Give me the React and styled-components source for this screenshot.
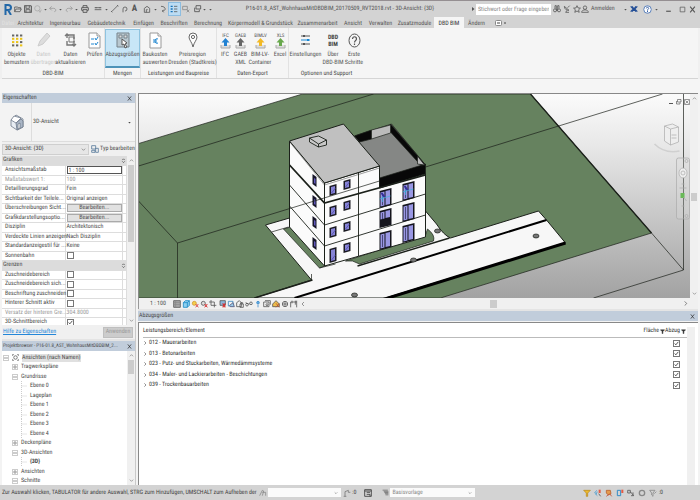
import React from "react";
import styled, { createGlobalStyle, css } from "styled-components";

const Global = createGlobalStyle`
  * { box-sizing: border-box; }
  body { margin: 0; background: #f0f0f0; text-rendering: geometricPrecision; }
  body, button, input, select, table {
    font-family: "Roboto Condensed", Roboto, sans-serif;
    font-size: 6px; line-height: 8px; color: #4a4a4a;
  }
  button, input, select { margin: 0; padding: 0; border: 0; background: none; border-radius: 0; text-rendering: inherit; }
  svg { display: block; flex: none; }
`;

const Page = styled.div`
  display: flex; flex-direction: column; min-height: 100vh; overflow: hidden;
`;
const TitleBar = styled.header`
  display: flex; align-items: center; height: 17px; padding: 0 3px 0 3px;
  background: #d3d3d3; border-top: 1px solid #958f92;
`;
const QuickTools = styled.div`
  display: flex; align-items: center; width: 210px; height: 16px;
`;
const ToolButton = styled.button`
  display: flex; align-items: center; justify-content: center;
  width: ${(p) => p.$w || 11}px; height: 12px; color: #555;
  ${(p) => p.$on && css`background: #bcdcf3; outline: 1px solid #8dbde0;`}
`;
const LetterTool = styled.b`font-size: 9px;`;
const DocTitle = styled.h1`
  flex: 1; margin: 0; padding-left: 2px; padding-right: 4px; text-align: center;
  font-size: 6px; font-weight: 400; white-space: nowrap; color: #555;
`;
const Search = styled.input`
  width: 75px; height: 11px; padding: 0 2px; background: #fff; color: #888;
  &::placeholder { color: #888; opacity: 1; }
`;
const TitleActions = styled.div`
  display: flex; align-items: center; width: 146px;
`;
const SignIn = styled.button`
  display: flex; align-items: center; gap: 2px; width: 42px; height: 12px; color: #555;
`;
const Tabs = styled.nav`
  display: flex; height: 11px; padding-left: 1px; background: #d3d3d3;
`;
const Tab = styled.a`
  width: ${(p) => p.$w}px; text-align: center; line-height: 13px; text-decoration: none;
  white-space: nowrap; color: ${(p) => (p.$faint ? "#e2e2e2" : "#555")};
  ${(p) => p.$on && css`background: #f5f5f5; color: #333;`}
`;
const Ribbon = styled.section`
  display: flex; height: 51px; margin: 0 2px; background: #f5f5f5; border-bottom: 1px solid #d5d5d5;
`;
const Group = styled.div`
  display: flex; flex-direction: column; border-right: 1px solid ${(p) => (p.$last ? "transparent" : "#e2e2e2")};
`;
const GroupTools = styled.div`display: flex; height: 40px; padding-top: 1px;`;
const GroupName = styled.div`text-align: center; line-height: 11px; white-space: nowrap;`;
const RibbonButton = styled.button`
  display: flex; flex-direction: column; align-items: center; width: ${(p) => p.$w}px; height: 39px;
  white-space: nowrap; color: ${(p) => (p.$off ? "#c8c8c8" : "#555")};
  ${(p) => p.$on && css`background: #c8e6f7; border: 1px solid #8fc3df; border-bottom: 2px solid #4e93b8;`}
`;
const IconBox = styled.span`
  display: flex; flex: none; align-items: center; justify-content: center; height: ${(p) => (p.$on ? 21 : 22)}px;
`;
const Spacer = styled.div`height: 14px; background: #f5f5f5;`;

const Main = styled.main`
  flex: 1; display: grid; grid-template-columns: 134px minmax(0, 1fr); column-gap: 2px; padding: 0 2px;
  background: #f3f3f3;
`;
const Side = styled.aside`
  display: flex; flex-direction: column; border-right: 1px solid #c9c9c9; background: #f0f0f0;
`;
const Work = styled.section`display: flex; flex-direction: column; min-width: 0;`;
const PanelTitle = styled.h2`
  display: flex; align-items: center; justify-content: space-between; flex: none; height: 10px; margin: 0;
  padding: 0 3px 0 1px; background: #c1cddb; font-size: ${(p) => (p.$long ? 5 : 6)}px; line-height: 10px;
  font-weight: 400; white-space: nowrap;
`;
const CloseButton = styled.button`display: flex; align-items: center; height: 8px; color: #333;`;
const TypeRow = styled.div`
  display: flex; align-items: center; height: 39px; background: #f3f3f3; border-bottom: 1px solid #ddd;
`;
const TypeIcon = styled.div`
  display: flex; align-items: center; justify-content: center; width: 30px; height: 38px; border-right: 1px solid #ddd;
`;
const TypeName = styled.button`
  display: flex; flex: 1; align-items: center; justify-content: space-between; padding: 0 3px 0 1px; height: 32px;
`;
const InstanceRow = styled.div`
  display: flex; align-items: center; height: 14px; gap: 2px;
`;
const InstanceSelect = styled.select`
  width: 87px; height: 11px; padding: 0 2px; border: 1px solid #cfcfcf; background: #e6e6e6; color: #444;
  appearance: none;
`;
const SelectWrap = styled.span`
  position: relative; display: block;
  & > svg { position: absolute; right: 3px; top: 3px; pointer-events: none; }
`;
const TypeButton = styled.button`display: flex; align-items: center; gap: 1px; white-space: nowrap;`;
const Scroller = styled.div`display: flex; overflow: hidden; height: ${(p) => p.$h}px; ${(p) => p.$white && css`background: #fff;`}`;
const PropTable = styled.table`
  width: calc(100% - 8px); table-layout: fixed; border-collapse: collapse; background: #fff; height: 171px;
  td, th { padding: 0 0 0 3px; border: 0 solid #ddd; border-width: 0 1px 1px 0;
    white-space: nowrap; text-align: left; font-weight: 400; line-height: 8px; }
  td { padding-left: 1px; }
  tr { height: 9px; }
  tr:nth-child(even) { height: 10px; }
`;
const NameCol = styled.col`width: 63px;`;
const TailCol = styled.col`width: 4px;`;
const SectionCell = styled.th`
  && { background: #dcdcdc; padding-left: 1px; }
`;
const SectionInner = styled.div`display: flex; justify-content: space-between; align-items: center;`;
const Muted = styled.span`color: #999;`;
const ScaleInput = styled.input`
  display: block; width: 100%; height: 8px; border: 1px solid #555; padding-left: 1px; line-height: 6px;
`;
const EditButton = styled.button`
  display: block; width: 100%; height: 8px; background: #e1e1e1; border: 1px solid #aaa; line-height: 6px;
`;
const Check = styled.input`
  appearance: none; display: block; width: 7px; height: 7px; margin: ${(p) => (p.$center ? "0 auto" : "0")};
  border: 1px solid #777; background: #fff;
  &:checked {
    background: #fff url("data:image/svg+xml,%3Csvg xmlns='http://www.w3.org/2000/svg' viewBox='0 0 6 6'%3E%3Cpath d='M.8 3l1.4 1.6L5.2 1' fill='none' stroke='%23333' /%3E%3C/svg%3E") center / 100%;
  }
`;
const Bar = styled.div`
  display: flex; flex-direction: column; align-items: center; justify-content: space-between; flex: none;
  width: 8px; padding: 2px 0; background: #f0f0f0; color: #555;
`;
const Thumb = styled.div`width: 6px; height: ${(p) => p.$h}px; margin-bottom: ${(p) => p.$mb}px; margin-top: 2px; background: #ccc;`;
const PropFooter = styled.div`
  display: flex; align-items: center; justify-content: space-between; height: 14px; padding: 0 2px 0 1px;
`;
const Help = styled.a`color: #2386d8;`;
const Apply = styled.button`width: 30px; height: 11px; background: #ccc; border: 1px solid #bfbfbf; color: #999;`;
const Gap = styled.div`height: 2px; background: #e4e4e4; flex: none;`;
const Tree = styled.ul`
  flex: 1; margin: 0; padding: 2px 0 0 1px; list-style: none; overflow: hidden; background: #fff;
`;
const Node = styled.li`
  display: flex; align-items: center; height: 9px; padding-left: ${(p) => p.$depth * 9}px; gap: 3px; white-space: nowrap;
  &:nth-child(even) { height: 10px; }
`;
const Branch = styled.span`width: 6px; height: 100%; display: flex; align-items: center; justify-content: center;`;
const NodeText = styled.span`
  font-weight: ${(p) => (p.$bold ? 700 : 400)};
  ${(p) => p.$sel && css`background: #e0e0e0; padding-right: 1px;`}
`;

const ViewArea = styled.div`position: relative; display: flex; height: 205px; border: solid #888; border-width: 1px 0 0 1px;`;
const Canvas = styled.div`flex: 1; min-width: 0; svg { width: 100%; height: 100%; }`;
const ViewButtons = styled.div`position: absolute; top: 2px; right: 7px; display: flex;`;
const ViewBar = styled.div`
  display: flex; align-items: center; height: 11px; padding-left: 11px; background: #f0f0f0; border-left: 1px solid #999;
`;
const ScaleLabel = styled.button`width: 22px; text-align: left;`;
const HTrack = styled.div`flex: 1; display: flex; align-items: center; justify-content: space-between; padding-right: 10px;`;
const HThumb = styled.div`width: 7px; height: 8px; margin-left: 48%; background: #ccc;`;
const ListArea = styled.div`
  flex: 1; display: flex; margin-top: 1px; padding: 4px 3px 0 4px; background: #fff;
  border: solid #888; border-width: 1px 0 0 1px;
`;
const List = styled.table`
  width: 100%; align-self: flex-start; border-collapse: collapse;
  th { height: 10px; padding: 0 0 2px; font-weight: 400; text-align: left; border-bottom: 1px solid #bbb; color: #333; white-space: nowrap; }
  td { height: 11px; padding: 0; color: #333; }
  tbody tr:nth-child(2n) td { height: 10px; }
`;
const CheckCol = styled.col`width: 22px;`;
const AreaCol = styled.col`width: 20px;`;
const RowLabel = styled.span`display: flex; align-items: center; gap: 2px;`;
const Filter = styled.span`display: flex; align-items: center; gap: 1px;`;
const ListBar = styled.div`width: 8px; flex: none; background: #f0f0f0;`;
const Status = styled.footer`
  display: flex; align-items: center; height: 15px; padding-left: 2px; background: #d3d3d3; color: #444; white-space: nowrap;
`;
const StatusText = styled.span`flex: none; width: 256px;`;
const StatusSelect = styled.select`
  width: ${(p) => p.$w}px; height: 9px; padding: 0 2px; background: #fafafa; appearance: none; color: #888;
`;
const StatusTools = styled.div`display: flex; align-items: center; margin-left: auto; padding-right: 37px;`;

const paths = {
  open: <path d="M1 10V3h4l1 1h4v2M1 10l2-4h8L9 10z" />,
  save: <><path d="M1 1h9l1 1v9H1z" strokeWidth="1.6" /><path d="M3 1v4h5V1M3 11V7h6v4" /></>,
  sync: <><circle cx="5" cy="5" r="4" stroke="#aaa" /><path d="M7 8l2 3 2-4" stroke="#aaa" /></>,
  undo: <path d="M4 2L1 5l3 3M1 5h6c4 0 4 5 1 5" stroke="#999" />,
  redo: <path d="M8 2l3 3-3 3M11 5H5C1 5 1 10 4 10" stroke="#999" />,
  print: <><path d="M3 4V1h6v3M3 8H1V4h10v4H9M3 7h6v4H3z" strokeWidth="1.4" /></>,
  measure: <path d="M1 4h10M1 7h10M3 3v2M9 3v2" />,
  line: <path d="M1 10L10 1M0 9l2 2M9 0l2 2" />,
  tag: <path d="M3 11V6a3 3 0 1 1 3 3" />,
  home: <path d="M2 5l4-3 4 3v6H2zM5 11V7h2" />,
  spin: <><path d="M3 2c8 0 8 7 2 7" /><path d="M7 7L5 9l2 2" /></>,
  thin: <><path d="M1 2h3M1 6h3M1 10h3" stroke="#1672b8" strokeWidth="2" /><path d="M6 2h5M6 6h5M6 10h5" /></>,
  closewin: <path d="M1 2h7v5H1zM7 7l4 4M11 7l-4 4" stroke="#888" />,
  windows: <path d="M3 1h7v5H3zM1 4v6h7V7" strokeWidth="1.3" />,
  find: <><circle cx="3" cy="8" r="2.3" /><circle cx="9" cy="8" r="2.3" /><path d="M3 5V1h2v7h2V1h2v4" /></>,
  satellite: <path d="M2 2c0 4 3 6 7 6L2 2zM6 8l-2 3h5M7 4l3-3" />,
  star: <path d="M6 1l1.5 3.4 3.7.3-2.8 2.5.9 3.8L6 9l-3.3 2 .9-3.8L.8 4.7l3.7-.3z" />,
  user: <><circle cx="6" cy="4" r="2.6" /><path d="M1 11c0-5 10-5 10 0z" /></>,
  exchange: <path d="M1 2l4 4-4 4M11 2L7 6l4 4M3 2l6 8M9 2L3 10" stroke="#244f97" strokeWidth="1.8" />,
  help: <><circle cx="6" cy="6" r="5" fill="#fff" stroke="#4b75b5" /><path d="M4.5 4.5c0-2 3-2 3 0 0 1-1.5 1-1.5 3M6 8v1.5" stroke="#244f97" /></>,
  min: <path d="M2 9h8" strokeWidth="2" />,
  max: <path d="M2 2h8v8H2z" />,
  x: <path d="M2 1l8 10M10 1L2 11" strokeWidth="1.8" />,
  boxx: <path d="M1 1h10v10H1zM3 3l6 6M9 3L3 9" />,
  caret: <path d="M3 5h6L6 8.5z" fill="currentColor" stroke="none" />,
  chevD: <path d="M2 4l4 4 4-4" />,
  chevU: <path d="M2 8l4-4 4 4" />,
  chevR: <path d="M4 1l5 5-5 5" strokeWidth="1.6" />,
  chevL: <path d="M8 2L4 6l4 4" />,
  play: <path d="M4 2l5 4-5 4z" fill="currentColor" stroke="none" />,
  double: <path d="M3 5l3-3 3 3M3 8l3 3 3-3" strokeWidth="1.8" />,
  grid: <><path d="M1 1h10v10H1z" fill="#aaa" /><path d="M1 4h10M1 7h10M4 1v10" stroke="#888" /></>,
  cube: <><path d="M2 4l3-3h6v7l-3 3H2z" fill="#8fd0f0" stroke="#1787c4" /><path d="M2 4h6v7M8 4l3-3" stroke="#1787c4" /></>,
  sun: <><circle cx="5" cy="5" r="3" fill="#f5cd4c" stroke="#d09a32" /><path d="M7 6l4 5M11 6l-4 5" stroke="#d82d2d" /></>,
  shadow: <><circle cx="5" cy="5" r="3" fill="#ddd" /><path d="M7 6l4 5M11 6l-4 5" stroke="#d82d2d" strokeWidth="1.5" /></>,
  crop: <path d="M3 0v8h8M0 3h8v8" />,
  cropred: <><path d="M3 1v7h8V1z" fill="#8ab6da" /><path d="M7 5l4 6M11 5l-4 6" stroke="#d82d2d" strokeWidth="1.6" /></>,
  cropblue: <><path d="M2 2h7v7H2z" stroke="#3888bf" /><path d="M4 8l5-4 2 6H5z" fill="#9ac9e8" stroke="#557" /></>,
  lock: <><path d="M1 4l4-3 3 3v6H1z" /><path d="M6 6h5v5H6zM7 6V4h3v2" /></>,
  glasses: <><circle cx="3" cy="7" r="2" /><circle cx="9" cy="5" r="2" /><path d="M1 4l4 2h2" /></>,
  bulb: <><circle cx="6" cy="4" r="2" fill="#62ace2" stroke="#3d8ccc" /><path d="M6 7v4" stroke="#3d8ccc" /></>,
  box: <><path d="M1 3h8v7H1zM3 1h8v6" /><circle cx="6" cy="7" r="1.5" /></>,
  paint: <><path d="M1 6l5-5 5 5v4H1z" fill="#edbe4b" /><path d="M6 5l5 6M11 5L6 11" stroke="#b24b38" /></>,
  globe: <><circle cx="6" cy="6" r="4" /><path d="M2 6h8M6 2v8" /></>,
  frame: <path d="M1 11V3h9V1M3 1v4M8 1v6M10 3v8" />,
  filter: <path d="M1 2h10L7 6v5H5V6z" fill="currentColor" stroke="currentColor" />,
  filterY: <path d="M1 2h10L7 6v5H5V6z" fill="#efbc2c" stroke="#bd8b20" />,
  selLink: <><path d="M4 2L1 6l4 4M5 4l-2 4" stroke="#4199cf" /><path d="M7 1h3v5H7z" fill="#e65b44" stroke="none" /><path d="M7 7l3 4" /></>,
  selHouse: <><path d="M2 2h6l1 5-4 2-3-3z" fill="#e59b4d" stroke="#b75f2c" /><path d="M7 7l3 4M2 11l4-3" stroke="#c44c33" /></>,
  selPin: <><path d="M2 2h5v8H2z" stroke="#328cc7" strokeWidth="1.5" /><path d="M8 1h3v5H8z" fill="#e65b44" stroke="none" /></>,
  drag: <path d="M1 2h4v4H1zM5 4l5 6H6M9 5v5" />,
  ring: <circle cx="6" cy="6" r="4" stroke="#888" strokeWidth="2" />,
  worker: <path d="M1 10l4-8 2 1-2 7M5 5h5v5" stroke="#888" />,
  funnel: <path d="M1 2h8L6 6v5L4 9V6zM8 7l3-3" stroke="#888" />,
  sheet: <><path d="M1 1h10v10H1z" stroke="#333" /><path d="M1 3h10M4 5h5M4 8h5v3" stroke="#333" /></>,
  layers: <path d="M1 2h9M3 4h8M4 6h7M5 8h6M6 10h5" stroke="#777" strokeWidth="1.5" />,
  key: <path d="M3 11V4l5-2v3M1 11h4M8 5h3" stroke="#777" />,
  edit: <><path d="M1 1h6v5H1zM1 8h5v3H1zM7 5h4v6H7z" stroke="#579" /></>,
  ansichten: <><circle cx="6" cy="6" r="3" /><path d="M1 3V1h2M9 1h2v2M11 9v2H9M3 11H1V9" /></>,
};
const Ic = ({ n, s = 8 }) => (
  <svg width={s} height={s} viewBox="0 0 12 12" fill="none" stroke="currentColor" strokeWidth="1.2" aria-hidden="true">{paths[n]}</svg>
);

const Objects = () => (
  <svg width="12" height="13" viewBox="0 0 12 13">
    {[0, 1, 2, 3].map((r) => [0, 1, 2].map((c) => (
      <rect key={`${r}${c}`} x={1 + c * 4} y={r * 3.3 + 0.5} width="2.3" height="2" fill={r === 1 || (r === 2 && c < 2) ? "#ebc315" : r === 3 && c === 2 ? "#ebc315" : "#666"} />
    )))}
  </svg>
);
const Pencil = () => (
  <svg width="14" height="16" viewBox="0 0 14 16" fill="#ddd" stroke="#ccc"><path d="M1 14l2-5 7-8 3 3-7 8z" /></svg>
);
const Refresh = () => (
  <svg width="13" height="16" viewBox="0 0 13 16" fill="none" stroke="#777"><path d="M10 7V3H3v3M1 4l2-2 2 2M3 9v4h7V9M12 12l-2 2-2-2" strokeWidth="1.4" /><path d="M5 5h5v5H5z" /></svg>
);
const DocCheck = ({ euro }) => (
  <svg width="13" height="17" viewBox="0 0 13 17" fill="#fff" stroke="#999">
    <path d="M1 1h8l3 3v12H1z" /><path d="M9 1v3h3" />
    {euro
      ? <path d="M9 7C5 5 5 13 9 11M4 8h4M4 10h4" fill="none" stroke="#2489d1" />
      : <path d="M3 7h3M3 12h3M7 6l1 2 2-3M7 11l1 2 2-3" fill="none" stroke="#2489d1" />}
  </svg>
);
const Deduct = () => (
  <svg width="14" height="17" viewBox="0 0 14 17" fill="#b9c8d0" stroke="#76838b">
    <path d="M1 1h12v14H1z" /><path d="M3 3h3v3H3zM8 3h3v3H8z" fill="#ddd" /><path d="M6 7l5 4-2 1 2 3-2 1-1-4-2 1z" fill="#fff" stroke="#555" />
  </svg>
);
const Pin = () => (
  <svg width="10" height="16" viewBox="0 0 10 16" fill="#fff" stroke="#666"><path d="M5 15C4 10 1 8 1 5a4 4 0 0 1 8 0c0 3-3 5-4 10z" /><circle cx="5" cy="5" r="1.6" /></svg>
);
const ExportIcon = ({ label, color }) => (
  <svg width="17" height="17" viewBox="0 0 17 17">
    <text x="8.5" y="5" textAnchor="middle" fontSize="5" fill="#555">{label}</text>
    <path d="M4 13v3h9v-3" fill="#ddd" stroke="#aaa" />
    <path d="M8.500 6l4 4.500h-2.500V14H7v-3.500H4.500z" fill={color} />
  </svg>
);
const Sliders = () => (
  <svg width="11" height="12" viewBox="0 0 11 12" stroke="#555"><path d="M1 2h9M1 10h9" /><path d="M1 6h9" stroke="#1687d5" /><path d="M4 1v2M4 9v2" strokeWidth="2" /><path d="M8 5v2" stroke="#1687d5" strokeWidth="2" /></svg>
);
const DbdBim = () => (
  <svg width="12" height="13" viewBox="0 0 12 13"><g fontSize="6" fontWeight="700" fill="#444" textAnchor="middle"><text x="6" y="5">DBD</text><text x="6" y="12">BIM</text></g></svg>
);
const HelpRing = () => (
  <svg width="13" height="15" viewBox="0 0 13 15" fill="none" stroke="#555"><ellipse cx="6.500" cy="7.500" rx="5.500" ry="6.500" /><path d="M4.500 6c0-3 4-3 4 0 0 1.500-2 1.500-2 3.500M6.500 10.500V12" strokeWidth="1.2" /></svg>
);
const House = () => (
  <svg width="14" height="18" viewBox="0 0 14 18" strokeWidth=".8" stroke="#6d7889">
    <path d="M1 7l5-5 7 4v8l-6 3-6-4z" fill="#e8edf3" /><path d="M1 7l3-4 7 2-5 5z" fill="#fff" /><path d="M6 10l5-4 2 2v6l-6 3z" fill="#a9b5c5" /><path d="M8 11l2-1v5l-2 1z" fill="#fff" />
  </svg>
);

const BigWindow = ({ x, y, dark, cyan }) => (
  <g>
    <path d={`M${x} ${y + 3}l12-3v17l-12 3z`} fill="#15151d" />
    <path d={`M${x + 1} ${y + 4.5}l4-1v${dark ? 7 : 14}l-4 1zM${x + 6} ${y + 3}l4.500-1v${dark ? 7 : 14}l-4.500 1z`} fill="#9997e3" />
    <path d={`M${x + 3} ${y + 5}v${dark ? 6 : 12}`} stroke="#2a2750" strokeWidth=".7" />
    {cyan && <path d={`M${x} ${y + 11}l11-3M${x + 3} ${y + 8}v6`} stroke="#3bb6dd" />}
    {cyan && <path d={`M${x + 2} ${y + 5}l3 4`} stroke="#342e9c" strokeWidth="2" />}
  </g>
);
const SmallWindow = ({ x, y, h = 9 }) => (
  <g><path d={`M${x} ${y + 2}l7-2v${h}l-7 2z`} fill="#1a1a22" /><path d={`M${x + 1.500} ${y + 3}l4-1v${h - 3}l-4 1z`} fill="#8683d6" /><path d={`M${x + 2} ${y + h - 1}l4-5`} stroke="#4a43a5" /></g>
);
const floors = [0, 21, 42, 63];
const Scene = () => (
  <svg viewBox="138 94 552 204" preserveAspectRatio="xMidYMid slice" fill="none" stroke="#1b201a" strokeWidth=".7">
    <defs><linearGradient id="sky" x1="0" y1="0" x2="0" y2="1"><stop offset="0" stopColor="#fbfbfb" /><stop offset=".25" stopColor="#e8e8e8" /><stop offset="1" stopColor="#a2a2a2" /></linearGradient></defs>
    <rect x="138" y="94" width="552" height="204" fill="url(#sky)" stroke="none" />
    <path d="M130 146L302 94h228L651 233 440 298H130z" fill="#66825f" />
    <path d="M530 94L651 233" strokeWidth="1.3" />
    <path d="M138 166L373 94M138 201l39 42v55M651 233l32 37V94M683 270l-90 28" />
    <path d="M254 298L311 280 265 225 289 218 324 230 425 211 436 224Q443 235 450 238L538 211 546 220 565 243 385 298z" fill="#f7f7f7" strokeWidth="1" />
    <path d="M283 229l7-2 37 38-8 3zM345 261l80-26 2-6q8 6 6 12l-74 23-7-3z" fill="#66825f" />
    <path d="M271 232l17-5M311 280v-6M319 268l16-4" />
    <path d="M254 298l58-18M357 266l92-28" strokeWidth="1.400" />
    <path d="M294 298L546 220" stroke="#000" strokeWidth="2" />
    <path d="M381 300L565 243" stroke="#000" strokeWidth="3" />
    <ellipse cx="437" cy="231" rx="3" ry="2" fill="#777" /><ellipse cx="535.500" cy="236" rx="3" ry="2" fill="#777" /><ellipse cx="413" cy="260" rx="3" ry="2" fill="#777" /><ellipse cx="354" cy="295" rx="3" ry="2" fill="#777" />
    <path d="M354 136l37-12 34 41-46 22-20-40z" fill="#858785" />
    <path d="M354 136l17-6v9l-12 3zM390 124l35 41-4 1-31-34zM379 178l46-14v10l-46 14z" fill="#080808" />
    <path d="M371 130l19-5v8l-19 6zM417 156l7 9-7-1z" fill="#bbb" />
    <path d="M289 141l35 42v83l-35-39zM324 183l55-17v22l46-14v63l-101 29z" fill="#fbfbfb" strokeWidth="1" />
    <path d="M289 141l54-17 36 42-55 17z" fill="#c0c0c0" strokeWidth="1" />
    <path d="M290 143l34 42 55-17" stroke="#777" />
    <path d="M289 165l35 38 101-28" strokeWidth="1.800" />
    <path d="M289 185l35 40 101-31M289 206l35 40 101-31M358 173v83M324 183v83" strokeWidth=".9" />
    <path d="M309 138l9-2 8 4-8 4zM309 138v4l9 5v-3M326 140v5l-8 2" fill="#c9c9c9" strokeWidth=".9" />
    {floors.map((d) => (
      <g key={d} stroke="none">
        <path d={`M312 ${174 + d}l4 3v10l-4-3z`} fill="#171629" /><path d={`M313.500 ${178 + d}l1.500 1v5l-1.500-1z`} fill="#6158bd" />
      </g>
    ))}
    <g stroke="none">
      {floors.map((d) => <SmallWindow key={d} x={329} y={184 + d} h={d === 63 ? 14 : 10} />)}
      {floors.map((d) => <SmallWindow key={`b${d}`} x={343} y={179 + d} />)}
      <BigWindow x={379} y={188} cyan /><BigWindow x={402} y={181} cyan />
      <BigWindow x={379} y={208} dark /><BigWindow x={402} y={202} />
      <BigWindow x={379} y={230} /><BigWindow x={402} y={223} />
    </g>
    <path d="M177 243L379 181M425 167L662 94" />
    <g stroke="#aaa">
      <path d="M664 126l8-2 6 3v15l-8 3-6-4z" fill="#eee" /><path d="M664 126l6 3 8-2M670 129v16M671 135h5M671 138h5" />
      <path d="M654 144q10 10 25 7" stroke="#d0d0d0" strokeWidth="1.500" />
      <rect x="676" y="158" width="13" height="61" rx="2" fill="#ddd" fillOpacity=".25" />
      <ellipse cx="682.500" cy="173" rx="4" ry="5" fill="#eee" /><circle cx="682.500" cy="173" r="2" /><path d="M679 188h7M681 184h3" />
      <rect x="680" y="193" width="4" height="5" fill="#69b958" stroke="none" /><path d="M683 197l3 4M681 206h3" /><circle cx="686" cy="161" r="1.500" /><circle cx="686" cy="216" r="1.500" />
    </g>
  </svg>
);

const quick = [["open"], ["save", 10], ["sync", 10], ["caret", 5], ["undo", 10], ["caret", 6], ["redo", 10], ["caret", 6], ["print", 12], ["measure", 14], ["caret", 4], ["line", 12], ["tag", 9], [null, 10], ["home", 15], ["caret", 3], ["spin", 12], ["thin", 11, true], ["closewin", 14], ["windows", 9], ["caret", 5], ["caret", 6]];
const tabs = [["Datei", 14, 0, 1], ["Architektur", 31], ["Ingenieurbau", 38], ["Gebäudetechnik", 45], ["Einfügen", 29], ["Beschriften", 32], ["Berechnung", 36], ["Körpermodell & Grundstück", 69], ["Zusammenarbeit", 45], ["Ansicht", 26], ["Verwalten", 29], ["Zusatzmodule", 39], ["DBD BIM", 30, 1], ["Ändern", 25]];
const groups = [
  ["DBD-BIM", [["Objekte", "bemustern", 29, <Objects />], ["Daten", "übertragen", 25, <Pencil />, "off"], ["Daten", "aktualisieren", 29, <Refresh />], ["Prüfen", "", 19, <DocCheck />]]],
  ["Mengen", [["Abzugsgrößen", "", 35, <Deduct />, "on"]]],
  ["Leistungen und Baupreise", [["Baukosten", "auswerten", 28, <DocCheck euro />], ["Preisregion", "Dresden (Stadtkreis)", 47, <Pin />]]],
  ["Daten-Export", [["IFC", "", 16, <ExportIcon label="IFC" color="#2382d2" />], ["GAEB", "XML", 15, <ExportIcon label="GAEB" color="#666" />], ["BIM-LV-", "Container", 24, <ExportIcon label="BIMLV" color="#f2b925" />], ["Excel", "", 16, <ExportIcon label="XLS" color="#68a84c" />]]],
  ["Optionen und Support", [["Einstellungen", "", 33, <Sliders />], ["Über", "DBD-BIM", 22, <DbdBim />], ["Erste", "Schritte", 20, <HelpRing />]]],
];
const props = [
  ["#Grafiken"], ["Ansichtsmaßstab", "scale"], ["Maßstabswert 1:", "100", 1], ["Detaillierungsgrad", "Fein"],
  ["Sichtbarkeit der Teilele...", "Original anzeigen"], ["Überschreibungen Sicht...", "edit"], ["Grafikdarstellungsoptio...", "edit"],
  ["Disziplin", "Architektonisch"], ["Verdeckte Linien anzeigen", "Nach Disziplin"], ["Standardanzeigestil für ...", "Keine"], ["Sonnenbahn", "off"],
  ["#Grenzen"], ["Zuschneidebereich", "off"], ["Zuschneidebereich sich...", "off"], ["Beschriftung zuschneiden", "off"], ["Hinterer Schnitt aktiv", "off"],
  ["Versatz der hinteren Gre...", "304.8000", 1], ["3D-Schnittbereich", "on"],
];
const tree = [["Ansichten (nach Namen)", 0, "-", "sel"], ["Tragwerkspläne", 1, "+"], ["Grundrisse", 1, "-"], ["Ebene 0", 2], ["Lageplan", 2], ["Ebene 1", 2], ["Ebene 2", 2], ["Ebene 3", 2], ["Ebene 4", 2], ["Deckenpläne", 1, "+"], ["3D-Ansichten", 1, "-"], ["{3D}", 2, "", "bold"], ["Ansichten", 1, "+"], ["Schnitte", 1, "-"]];
const works = ["012 - Mauerarbeiten", "013 - Betonarbeiten", "023 - Putz- und Stuckarbeiten, Wärmedämmsysteme", "034 - Maler- und Lackierarbeiten - Beschichtungen", "039 - Trockenbauarbeiten"];
const viewTools = ["grid", "cube", "sun", "shadow", "crop", "cropred", "cropblue", "lock", "glasses", "bulb", "box", "paint", "globe", "frame", "chevL"];

const BranchMark = ({ kind }) => (
  <svg width="6" height="10" viewBox="0 0 6 10" fill="none" stroke="#ccc">
    {kind ? <><rect x=".5" y="2.500" width="5" height="5" /><path d={kind === "+" ? "M1 5h4M3 3v4" : "M1 5h4"} stroke="#999" /></> : <path d="M.5 0v10M.5 5h5" stroke="#ccc" strokeDasharray="1 1" />}
  </svg>
);
const Value = ({ name, v, muted }) => {
  if (v === "scale") return <ScaleInput aria-label={name} defaultValue="1 : 100" />;
  if (v === "edit") return <EditButton aria-label={`${name} Bearbeiten`}>Bearbeiten...</EditButton>;
  if (v === "on" || v === "off") return <Check type="checkbox" aria-label={name} defaultChecked={v === "on"} />;
  return muted ? <Muted>{v}</Muted> : v;
};

export default function App() {
  return (
    <Page>
      <Global />
      <TitleBar>
        <QuickTools>
          <ToolButton $w={10} aria-label="Revit">
            <svg width="8" height="11" viewBox="0 0 8 11" fill="none" stroke="#2368a8" strokeWidth="2"><path d="M1.500 11V1H4c4 0 4 5 0 5H2M4 6l3 5" /></svg>
          </ToolButton>
          {quick.map(([n, w, on], i) => <ToolButton key={i} $w={w} $on={on} aria-label={n || "Text"}>{n ? <Ic n={n} s={n === "caret" ? 5 : 8} /> : <LetterTool>A</LetterTool>}</ToolButton>)}
        </QuickTools>
        <DocTitle>P16-01.8_AST_WohnhausMitDBDBIM_20170509_RVT2018.rvt - 3D-Ansicht: {"{3D}"}</DocTitle>
        <ToolButton $w={7} aria-label="Suche einblenden"><Ic n="play" s={6} /></ToolButton>
        <Search aria-label="Suche" placeholder="Stichwort oder Frage eingeben" />
        <TitleActions>
          <ToolButton $w={11} aria-label="Suchen"><Ic n="find" /></ToolButton>
          <ToolButton $w={10} aria-label="Kommunikation"><Ic n="satellite" /></ToolButton>
          <ToolButton $w={9} aria-label="Favoriten"><Ic n="star" /></ToolButton>
          <SignIn><Ic n="user" />Anmelden</SignIn>
          <ToolButton $w={4} aria-label="Konto"><Ic n="caret" s={5} /></ToolButton>
          <ToolButton $w={14} aria-label="Exchange"><Ic n="exchange" /></ToolButton>
          <ToolButton $w={13} aria-label="Hilfe"><Ic n="help" s={9} /></ToolButton>
          <ToolButton $w={5} aria-label="Hilfemenü"><Ic n="caret" s={5} /></ToolButton>
          <ToolButton $w={18} aria-label="Minimieren"><Ic n="min" s={7} /></ToolButton>
          <ToolButton $w={10} aria-label="Maximieren"><Ic n="max" s={7} /></ToolButton>
          <ToolButton $w={10} aria-label="Schließen"><Ic n="x" s={7} /></ToolButton>
        </TitleActions>
      </TitleBar>
      <Tabs>
        {tabs.map(([t, w, on, faint]) => <Tab key={t} href="#" $w={w} $on={on} $faint={faint}>{t}</Tab>)}
        <ToolButton $w={24} aria-label="Multifunktionsleiste"><svg width="12" height="8" viewBox="0 0 12 8" fill="#fff" stroke="#888"><rect x=".5" y="1.500" width="6" height="5" rx="1" /><path d="M2 4h3M9 4h2" stroke="#444" /></svg></ToolButton>
      </Tabs>
      <Ribbon>
        {groups.map(([name, items], gi) => (
          <Group key={name} $last={gi === 4}>
            <GroupTools>
              {items.map(([a, b, w, icon, state]) => (
                <RibbonButton key={a + b} $w={w} $on={state === "on"} $off={state === "off"}>
                  <IconBox $on={state === "on"}>{icon}</IconBox><span>{a}</span><span>{b}</span>
                </RibbonButton>
              ))}
            </GroupTools>
            <GroupName>{name}</GroupName>
          </Group>
        ))}
      </Ribbon>
      <Spacer />
      <Main>
        <Side>
          <PanelTitle>Eigenschaften<CloseButton aria-label="Schließen"><Ic n="x" s={5} /></CloseButton></PanelTitle>
          <TypeRow>
            <TypeIcon><House /></TypeIcon>
            <TypeName>3D-Ansicht<Ic n="caret" s={5} /></TypeName>
          </TypeRow>
          <InstanceRow>
            <SelectWrap><InstanceSelect aria-label="Auswahl"><option>3D-Ansicht: {"{3D}"}</option></InstanceSelect><Ic n="chevD" s={5} /></SelectWrap>
            <TypeButton><Ic n="edit" />Typ bearbeiten</TypeButton>
          </InstanceRow>
          <Scroller $h={169}>
            <PropTable>
              <colgroup><NameCol /><col /><TailCol /></colgroup>
              <tbody>
                {props.map(([n, v, muted], i) => n[0] === "#"
                  ? <tr key={i}><SectionCell colSpan={3}><SectionInner>{n.slice(1)}<Ic n="double" s={5} /></SectionInner></SectionCell></tr>
                  : <tr key={i}><th scope="row">{muted ? <Muted>{n}</Muted> : n}</th><td><Value name={n} v={v} muted={muted} /></td><td /></tr>)}
              </tbody>
            </PropTable>
            <Bar><Ic n="chevU" s={5} /><Thumb $h={78} $mb={76} /><Ic n="chevD" s={5} /></Bar>
          </Scroller>
          <PropFooter><Help href="#">Hilfe zu Eigenschaften</Help><Apply disabled>Anwenden</Apply></PropFooter>
          <Gap />
          <PanelTitle $long>Projektbrowser - P16-01.8_AST_WohnhausMitDBDBIM_2...<CloseButton aria-label="Schließen"><Ic n="x" s={5} /></CloseButton></PanelTitle>
          <Scroller $h={134} $white>
            <Tree>
              {tree.map(([t, d, k, st]) => (
                <Node key={t} $depth={d}>
                  <Branch><BranchMark kind={k} /></Branch>
                  {st === "sel" && <Ic n="ansichten" s={7} />}
                  <NodeText $sel={st === "sel"} $bold={st === "bold"}>{t}</NodeText>
                </Node>
              ))}
            </Tree>
            <Bar><Ic n="chevU" s={5} /><Thumb $h={15} $mb={104} /><Ic n="chevD" s={5} /></Bar>
          </Scroller>
        </Side>
        <Work>
          <ViewArea>
            <Canvas><Scene /></Canvas>
            <ViewButtons>
              <ToolButton $w={8} aria-label="Ansicht minimieren"><Ic n="min" s={6} /></ToolButton>
              <ToolButton $w={7} aria-label="Ansicht wiederherstellen"><Ic n="windows" s={6} /></ToolButton>
              <ToolButton $w={9} aria-label="Ansicht schließen"><Ic n="boxx" s={6} /></ToolButton>
            </ViewButtons>
            <Bar><Ic n="chevU" s={5} /><Thumb $h={8} $mb={0} /><Ic n="chevD" s={5} /></Bar>
          </ViewArea>
          <ViewBar>
            <ScaleLabel>1 : 100</ScaleLabel>
            {viewTools.map((n) => <ToolButton key={n} $w={9} aria-label={n}><Ic n={n} s={n === "chevL" ? 6 : 8} /></ToolButton>)}
            <HTrack><HThumb /><Ic n="chevR" s={5} /></HTrack>
          </ViewBar>
          <Gap />
          <PanelTitle>Abzugsgrößen<CloseButton aria-label="Schließen"><Ic n="x" s={5} /></CloseButton></PanelTitle>
          <ListArea>
            <List>
              <colgroup><col /><AreaCol /><CheckCol /></colgroup>
              <thead><tr><th>Leistungsbereich/Element</th><th><Filter>Fläche<Ic n="filter" s={5} /></Filter></th><th><Filter>Abzug<Ic n="filter" s={5} /></Filter></th></tr></thead>
              <tbody>
                {works.map((w) => <tr key={w}><td><RowLabel><Ic n="chevR" s={4} />{w}</RowLabel></td><td /><td><Check $center type="checkbox" aria-label={w} defaultChecked /></td></tr>)}
              </tbody>
            </List>
            <ListBar />
          </ListArea>
        </Work>
      </Main>
      <Status>
        <StatusText>Zur Auswahl klicken, TABULATOR für andere Auswahl, STRG zum Hinzufügen, UMSCHALT zum Aufheben der</StatusText>
        <ToolButton $w={10} aria-label="Arbeitssatz"><Ic n="worker" /></ToolButton>
        <SelectWrap><StatusSelect $w={73} aria-label="Aktiver Bearbeitungsbereich"><option></option></StatusSelect><Ic n="chevD" s={4} /></SelectWrap>
        <ToolButton $w={11} aria-label="Bearbeitungsanfragen"><Ic n="key" /></ToolButton>:0
        <ToolButton $w={24} aria-label="Entwurfsoptionen"><Ic n="sheet" /></ToolButton>
        <ToolButton $w={10} aria-label="Ebenen"><Ic n="layers" s={7} /></ToolButton>
        <SelectWrap><StatusSelect $w={85} aria-label="Entwurfsoption"><option>Basisvorlage</option></StatusSelect><Ic n="chevD" s={4} /></SelectWrap>
        <StatusTools>
          {["filterY", "selLink", "selHouse", "selPin", "drag", "ring", "funnel"].map((n) => <ToolButton key={n} aria-label={n}><Ic n={n} /></ToolButton>)}:0
        </StatusTools>
      </Status>
    </Page>
  );
}
